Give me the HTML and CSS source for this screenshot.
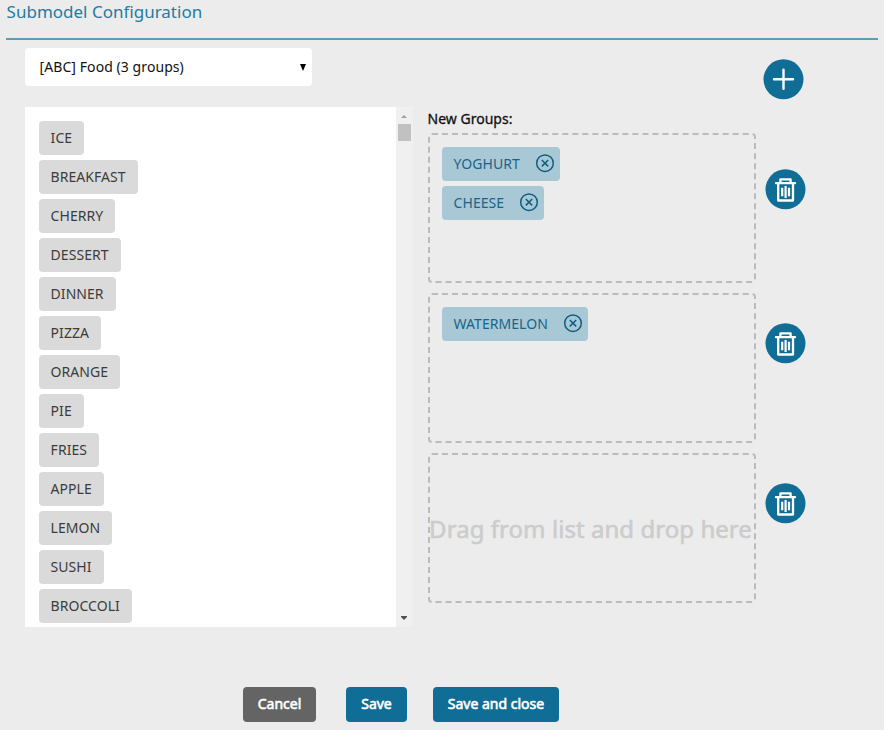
FILE: index.html
```html
<!DOCTYPE html>
<html lang="en">
<head>
<meta charset="utf-8">
<title>Submodel Configuration</title>
<link rel="stylesheet" href="styles.css">
</head>
<body>
<svg class="defs" aria-hidden="true">
  <symbol id="trash" viewBox="0 0 40 40">
    <circle cx="19.5" cy="20.3" r="20" fill="#106e96"/>
    <g fill="none" stroke="#fff" stroke-width="2.3" stroke-linecap="round" stroke-linejoin="round">
      <path d="M10 14.2H29"/>
      <path d="M14.4 13.5V10.4H24.6V13.5M12.2 14.5V31.5H27V14.5"/>
      <path d="M16.2 18.8V27.2M19.6 17V29M23 18.8V27.2" stroke-width="2.2" stroke-linecap="butt"/>
    </g>
  </symbol>
  <symbol id="remove" viewBox="0 0 20 20">
    <g fill="none" stroke="#0f5f80" stroke-width="1.5">
      <circle cx="10" cy="10.2" r="8.3"/>
      <path d="M6.8 7L13.2 13.4M13.2 7L6.8 13.4"/>
    </g>
  </symbol>
</svg>
<header class="title">Submodel Configuration</header>
<main class="content">
  <section class="source">
    <div class="select"><span>[ABC] Food (3 groups)</span><svg class="caret" viewBox="0 0 6 7"><path d="M0 0H6L3 7Z"/></svg></div>
    <div class="list">
      <div class="items">
        <span class="chip">ICE</span>
        <span class="chip">BREAKFAST</span>
        <span class="chip">CHERRY</span>
        <span class="chip">DESSERT</span>
        <span class="chip">DINNER</span>
        <span class="chip">PIZZA</span>
        <span class="chip">ORANGE</span>
        <span class="chip">PIE</span>
        <span class="chip">FRIES</span>
        <span class="chip">APPLE</span>
        <span class="chip">LEMON</span>
        <span class="chip">SUSHI</span>
        <span class="chip">BROCCOLI</span>
      </div>
      <div class="scrollbar">
        <svg class="arrow up" viewBox="0 0 6 3"><path d="M0 3L3 0L6 3Z"/></svg>
        <div class="thumb"></div>
        <svg class="arrow down" viewBox="0 0 6 4"><path d="M0 0H6V1L3 4L0 1Z"/></svg>
      </div>
    </div>
  </section>
  <section class="groups">
    <h2 class="label">New Groups:</h2>
    <div class="drop">
      <span class="chip picked">YOGHURT<svg class="remove"><use href="#remove"/></svg></span>
      <span class="chip picked">CHEESE<svg class="remove"><use href="#remove"/></svg></span>
    </div>
    <div class="drop">
      <span class="chip picked">WATERMELON<svg class="remove"><use href="#remove"/></svg></span>
    </div>
    <div class="drop empty"><span class="hint">Drag from list and drop here</span></div>
  </section>
  <aside class="actions">
    <svg class="round add" viewBox="0 0 40 40"><circle cx="19.5" cy="20.3" r="20" fill="#106e96"/><path d="M19.5 10.8V29.8M10 20.3H29" stroke="#fff" stroke-width="2.4" stroke-linecap="round"/></svg>
    <svg class="round first" viewBox="0 0 40 40"><use href="#trash"/></svg>
    <svg class="round second" viewBox="0 0 40 40"><use href="#trash"/></svg>
    <svg class="round third" viewBox="0 0 40 40"><use href="#trash"/></svg>
  </aside>
</main>
<footer class="buttons">
  <button class="btn cancel">Cancel</button>
  <button class="btn save">Save</button>
  <button class="btn close">Save and close</button>
</footer>
</body>
</html>
```
FILE: styles.css
```css
* { box-sizing: border-box; }
body {
  margin: 0;
  height: 730px;
  overflow: hidden;
  background: #ececec;
  font: 14px/20px "Noto Sans", sans-serif;
  color: #111;
}
svg { display: block; flex: none; }
.defs { width: 0; height: 0; position: absolute; }
.title {
  height: 40px;
  margin: 0 6px;
  padding: 2px 0 0 0.6px;
  border-bottom: 2px solid #589dbb;
  color: #247ba0;
  font-size: 17px;
}
.content { display: flex; height: 647px; padding: 8.4px 0 0 24.6px; }
.source { width: 403px; }
.select {
  display: flex;
  justify-content: space-between;
  align-items: center;
  width: 287px;
  height: 38px;
  padding: 0 6px 0 15px;
  border-radius: 4px;
  background: #fff;
  letter-spacing: 0.07px;
}
.caret { width: 6px; height: 7px; }
.list { display: flex; width: 388px; height: 520px; margin-top: 21px; background: #fff; }
.items {
  display: flex;
  flex: 1;
  flex-direction: column;
  align-items: flex-start;
  gap: 5px;
  padding: 14px 0 0 14px;
}
.chip {
  display: flex;
  align-items: center;
  height: 34px;
  flex: none;
  padding: 0 12px;
  border-radius: 4px;
  background: #dadada;
  color: #3c3c3c;
  letter-spacing: 0.04px;
  white-space: nowrap;
}
.picked { padding-right: 5px; background: #a9c8d6; color: #17658a; }
.remove { width: 20px; height: 20px; margin: -2px 0 0 15px; }
.scrollbar {
  display: flex;
  flex-direction: column;
  align-items: center;
  width: 17px;
  padding: 8px 0 7px;
  background: #f0f0f0;
}
.arrow { width: 6px; fill: #505050; }
.up { height: 3px; fill: #a0a0a0; }
.down { height: 4px; margin-top: auto; }
.thumb { width: 13px; height: 17px; margin-top: 6px; background: #c1c1c1; }
.groups { display: flex; flex-direction: column; width: 328px; padding-top: 60.8px; }
.label {
  height: 24px;
  margin: 0;
  font-size: 14px;
  line-height: 20px;
  font-weight: 400;
  -webkit-text-stroke: 0.3px #111;
}
.drop {
  display: flex;
  flex-direction: column;
  align-items: flex-start;
  gap: 5px;
  height: 150px;
  margin-bottom: 10px;
  padding: 12px;
  border: 2px dashed #bbb;
  border-radius: 4px;
}
.empty { justify-content: center; padding: 2px 0 0; }
.hint { color: #ccc; font-size: 24px; line-height: 32px; letter-spacing: 0.05px; white-space: nowrap; -webkit-text-stroke: 0.6px #ccc; margin-left: -0.5px; }
.actions { width: 60px; padding: 11px 0 0 10px; margin-left: 0.1px; }
.round { width: 40px; height: 40px; overflow: visible; }
.add { margin-left: -2px; }
.first { margin-top: 70px; }
.second { margin-top: 114px; }
.third { margin-top: 120px; }
.round use { overflow: visible; }
#trash { overflow: visible; }
.buttons { display: flex; padding-left: 243px; }
.btn {
  height: 35px;
  padding: 0 0 2px;
  border: 0;
  border-radius: 4px;
  background: #106e96;
  color: #fff;
  font: inherit;
  -webkit-text-stroke: 0.6px #fff;
}
.cancel { width: 73px; margin-right: 30px; background: #646464; }
.save { width: 61px; margin-right: 26px; }
.close { width: 126px; }
```
